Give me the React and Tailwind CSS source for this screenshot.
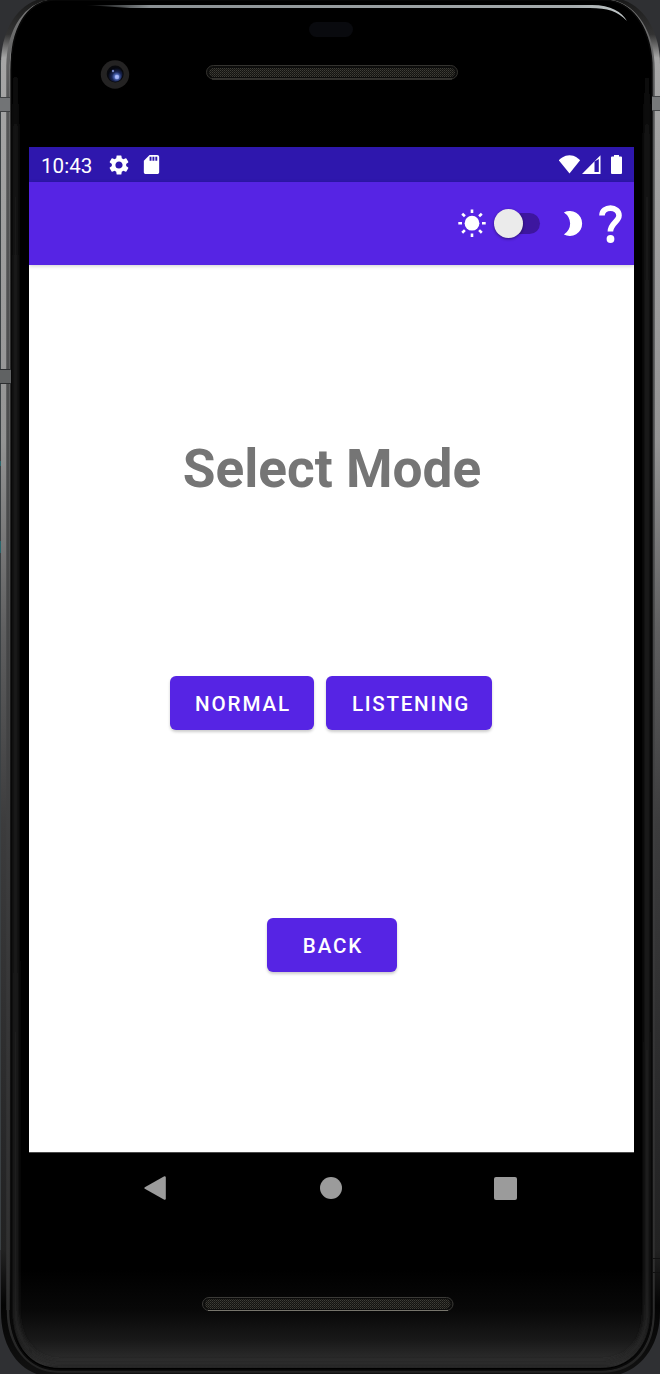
import React from "react";

function Casing() {
  const body = "M54 -3H606C640 -3 660 28 660 64V1312C660 1350 636 1377 602 1377H54C22 1377 1 1350 1 1312V64C1 28 20 -3 54 -3Z";
  const glass = "M56 0H602C636 0 652 34 652 70V1312C652 1346 632 1370 600 1370H60C28 1370 11 1346 11 1312V70C11 30 26 0 56 0Z";
  return (
    <svg className="absolute inset-0 h-full w-full" viewBox="0 0 660 1374" aria-hidden="true">
      <defs>
        <linearGradient id="metal" x1="0" y1="0" x2="0" y2="1374" gradientUnits="userSpaceOnUse">
          <stop offset="0" stopColor="#1a1a1a" />
          <stop offset=".025" stopColor="#333" />
          <stop offset=".042" stopColor="#a6a6a6" />
          <stop offset=".32" stopColor="#949494" />
          <stop offset=".46" stopColor="#5f5f60" />
          <stop offset=".6" stopColor="#3c3c3d" />
          <stop offset=".85" stopColor="#262627" />
          <stop offset=".91" stopColor="#222" />
          <stop offset=".95" stopColor="#040404" />
          <stop offset="1" stopColor="#111" />
        </linearGradient>
        <linearGradient id="rim" x1="0" y1="0" x2="0" y2="1374" gradientUnits="userSpaceOnUse">
          <stop offset="0" stopColor="#777" />
          <stop offset=".07" stopColor="#555657" />
          <stop offset=".35" stopColor="#4b4c4d" />
          <stop offset=".75" stopColor="#363637" />
          <stop offset=".93" stopColor="#303030" />
          <stop offset="1" stopColor="#222" />
        </linearGradient>
        <linearGradient id="chin" x1="0" y1="1270" x2="0" y2="1371" gradientUnits="userSpaceOnUse">
          <stop offset="0" stopColor="#000" />
          <stop offset=".4" stopColor="#080808" />
          <stop offset=".7" stopColor="#191919" />
          <stop offset=".93" stopColor="#303030" />
          <stop offset="1" stopColor="#171717" />
        </linearGradient>
        <linearGradient id="glow" x1="0" y1="60" x2="0" y2="1374" gradientUnits="userSpaceOnUse">
          <stop offset="0" stopColor="#000" />
          <stop offset=".06" stopColor="#1f1f1f" />
          <stop offset="1" stopColor="#272727" />
        </linearGradient>
        <linearGradient id="shine" x1="85" y1="0" x2="628" y2="0" gradientUnits="userSpaceOnUse">
          <stop offset="0" stopColor="#8b9194" stopOpacity="0" />
          <stop offset=".12" stopColor="#8b9194" />
          <stop offset=".9" stopColor="#a5abad" />
          <stop offset="1" stopColor="#c3c9ca" />
        </linearGradient>
        <radialGradient id="lens" cx=".6" cy=".65" r=".6">
          <stop offset="0" stopColor="#b4c4ff" />
          <stop offset=".25" stopColor="#526dbb" />
          <stop offset=".55" stopColor="#182452" />
          <stop offset="1" stopColor="#05070f" />
        </radialGradient>
        <pattern id="mesh" width="2" height="2" patternUnits="userSpaceOnUse">
          <rect width="2" height="2" fill="#141411" />
          <rect width="1" height="1" fill="#3f3e38" />
          <rect x="1" y="1" width="1" height="1" fill="#2f2e29" />
        </pattern>
        <filter id="soft" x="-20%" y="-5%" width="140%" height="110%">
          <feGaussianBlur stdDeviation="2" />
        </filter>
        <clipPath id="glassClip"><path d={glass} /></clipPath>
      </defs>

      <rect width="660" height="1374" fill="#2f3033" />
      <rect y="60" width="2" height="1190" fill="#3b4144" />
      <path d={body} fill="url(#metal)" />
      <rect y="461" width="1" height="5" fill="#28666c" />
      <rect y="541" width="1" height="12" fill="#28666c" />
      <path d="M8 1310V66C8.500 30 26 1 56 1" fill="none" stroke="url(#rim)" strokeWidth="3.500" />
      <path d="M8 1310C8 1346 28 1371 58 1371.500H602C636 1371.500 653.500 1346 653.500 1312V70C653.500 36 638 2 604 0" fill="none" stroke="url(#rim)" strokeWidth="2.500" />
      <path d={glass} fill="#000" />
      <g clipPath="url(#glassClip)">
        <path d="M11 1260H652V1374H11Z" fill="url(#chin)" />
        <path d={glass} fill="none" stroke="#000" strokeWidth="4" />
        <path d="M15.500 60V1308C15.500 1345 36 1363 62 1363H600C630 1363 647 1342 647 1310V60" fill="none" stroke="url(#glow)" strokeWidth="5" filter="url(#soft)" />
      </g>
      <path d={glass} fill="none" stroke="#090909" strokeWidth="1.500" />
      <path d="M85 5H592C611 5 622 12 627 21C617 11 608 8 590 8H130Z" fill="url(#shine)" />

      <rect y="97" width="10" height="15" fill="#727476" />
      <path d="M0 97.500H10M0 111.500H10" stroke="#3f4143" />
      <rect x="652" y="96" width="8" height="15" fill="#77797a" />
      <path d="M652 96.500H660M652 110.500H660" stroke="#444648" />
      <rect y="369" width="11" height="15" fill="#606263" />
      <path d="M0 369.500H11M0 383.500H11" stroke="#2c2e30" />
      <path d="M652 1258.500H660M652 1272.500H660" stroke="#111" />

      <rect x="309" y="22" width="44" height="15" rx="7.500" fill="#090a0e" />
      <circle cx="115" cy="74.500" r="14.200" fill="#242323" />
      <circle cx="115.200" cy="74" r="8.500" fill="#08090d" />
      <circle cx="115.200" cy="74.500" r="7.300" fill="url(#lens)" />
      <circle cx="113" cy="71" r="1.200" fill="#7282bd" />
      <circle cx="117" cy="77" r="2.200" fill="#b1bfff" opacity=".75" />

      <rect x="206.500" y="65.500" width="251" height="13.500" rx="6.750" fill="#0d0d0c" stroke="#34332f" />
      <rect x="209" y="68" width="246" height="9" rx="4.500" fill="url(#mesh)" />
      <path d="M212 79H452" stroke="#4b4a44" />
      <rect x="202.500" y="1297.500" width="250.500" height="13" rx="6.500" fill="#0d0d0c" stroke="#3b3a37" />
      <rect x="205" y="1299" width="245.500" height="10" rx="5" fill="url(#mesh)" />
      <path d="M208 1310.500H448" stroke="#77756c" />
    </svg>
  );
}

function StatusBar() {
  return (
    <div className="flex h-[35px] items-center justify-between bg-[#2e17ad] pr-[11px] pl-3">
      <div className="flex items-center">
        <span className="w-[66px] pt-[3px] text-[20.6px] leading-6">10:43</span>
        <svg className="h-[24px] w-[24px]" viewBox="0 0 24 24" fill="currentColor">
          <path d="M19.140 12.940c.040-.300.060-.610.060-.940 0-.320-.020-.640-.070-.940l2.030-1.580a.49.49 0 0 0 .120-.610l-1.920-3.320a.488.488 0 0 0-.590-.220l-2.390.960c-.500-.380-1.030-.700-1.620-.940l-.360-2.540a.484.484 0 0 0-.480-.410h-3.840c-.240 0-.430.170-.470.410l-.360 2.540c-.590.240-1.130.570-1.620.940l-2.390-.960c-.220-.080-.470 0-.590.220L2.740 8.870c-.120.210-.080.470.120.610l2.030 1.580c-.050.300-.090.630-.090.940s.020.640.070.940l-2.030 1.580a.49.49 0 0 0-.120.610l1.920 3.320c.120.220.370.290.590.220l2.390-.960c.500.380 1.030.700 1.620.940l.360 2.540c.050.240.240.410.480.410h3.840c.240 0 .440-.170.470-.410l.360-2.540c.590-.240 1.130-.560 1.620-.940l2.390.960c.220.080.470 0 .590-.220l1.920-3.320c.120-.220.070-.470-.120-.610l-2.010-1.580zM12 15.600A3.610 3.610 0 0 1 8.400 12c0-1.980 1.620-3.600 3.600-3.600s3.600 1.620 3.600 3.600-1.620 3.600-3.600 3.600z" />
        </svg>
        <svg className="ml-[9px] h-[23px] w-[23px]" viewBox="0 0 24 24" fill="currentColor">
          <path d="M18 2h-8L4.020 8 4 20c0 1.100.900 2 2 2h12c1.100 0 2-.900 2-2V4c0-1.100-.900-2-2-2zm-6 6h-2V4h2v4zm3 0h-2V4h2v4zm3 0h-2V4h2v4z" />
        </svg>
      </div>
      <div className="flex items-center pb-px">
        <svg className="h-[20px] w-[22px]" viewBox="0 0 22 20" fill="currentColor">
          <path d="M10.500 19.500L-.1 6.300C1 5 5 1.200 10.500 1.200S20 5 21.100 6.300Z" />
        </svg>
        <svg className="ml-px h-[20px] w-[19px]" viewBox="0 0 19 20" fill="currentColor">
          <path fillRule="evenodd" d="M0 20L18.500 1.300V20ZM12.500 7.500V18H16.800V5Z" />
        </svg>
        <svg className="ml-[10px] h-[20px] w-[12px]" viewBox="0 0 12 20" fill="currentColor">
          <path d="M3 1H8V2.500H10Q11 2.500 11 3.500V19Q11 20 10 20H1Q0 20 0 19V3.500Q0 2.500 1 2.500H3Z" />
        </svg>
      </div>
    </div>
  );
}

function AppBar() {
  return (
    <header className="z-10 flex h-[83px] items-center justify-end bg-[#5624e4] pr-[11px] shadow-[0_1px_4px_rgba(0,0,0,0.2)]">
      <svg className="h-[30px] w-[30px]" viewBox="0 0 30 30" fill="currentColor">
        <circle cx="15" cy="14.200" r="7.400" />
        <path d="M15 .5V4M15 24.400V27.900M1.300 14.200H5M25 14.200H28.700M5.200 4.700L7.900 7.300M22.100 21.100L24.800 23.700M5.200 23.700L7.900 21.100M22.100 7.300L24.800 4.700" stroke="currentColor" strokeWidth="2.600" />
      </svg>
      <button role="switch" aria-checked="false" aria-label="Dark mode" className="ml-[7px] flex h-[21px] w-[46px] items-center rounded-full bg-[#3d169f]">
        <span className="h-[29px] w-[29px] shrink-0 rounded-full bg-[#ebebeb] shadow-[0_1px_3px_rgba(0,0,0,0.45)]" />
      </button>
      <svg className="ml-[23px] h-[26px] w-[20px]" viewBox="0 0 20 26" fill="currentColor">
        <path d="M.9 1.400A12.500 12.500 0 1 1 .9 23.600A13 13 0 0 0 .9 1.400Z" />
      </svg>
      <svg className="ml-4 h-[38px] w-[24px]" viewBox="0 0 24 38" fill="none">
        <path d="M3 10.500C3 5.800 7 3.100 11.500 3.100S20 6.200 20 10.500C20 16.500 11.400 18.500 11.400 26.500" stroke="currentColor" strokeWidth="5.600" />
        <circle cx="11.500" cy="34" r="3.900" fill="currentColor" />
      </svg>
    </header>
  );
}

function ModeButton({ children, className }) {
  return (
    <button className={`h-[54px] rounded-[6px] bg-[#5624e4] pt-[2px] text-[20.6px] font-medium text-white shadow-[0_2px_3px_rgba(0,0,0,0.2)] ${className}`}>
      {children}
    </button>
  );
}

function NavBar() {
  return (
    <nav className="flex h-[71px] items-center justify-between border-t border-[#4a4a4a] pr-[117px] pl-[115px] text-[#9b9b9b]">
      <svg className="h-[24px] w-[22px]" viewBox="0 0 22 24" fill="currentColor">
        <path d="M.8 11.200L20.300.3Q21.800 .2 21.800 1.500V22.500Q21.800 24 20.300 23.700L.8 12.800Q-.2 12 .8 11.200Z" />
      </svg>
      <span className="ml-[2px] h-[22px] w-[22px] rounded-full bg-[#9b9b9b]" />
      <span className="h-[23px] w-[23px] rounded-[2px] bg-[#9b9b9b]" />
    </nav>
  );
}

export default function App() {
  return (
    <div className="relative h-[1374px] w-[660px] overflow-hidden font-[Roboto,sans-serif]">
      <Casing />
      <div className="relative flex flex-col pt-[147px] pr-[26px] pl-[29px] text-white">
        <StatusBar />
        <AppBar />
        <main className="flex h-[887px] flex-col items-center bg-white pt-[172px]">
          <h1 className="pl-px text-[53.200px] leading-[64px] font-bold text-[#757575]">Select Mode</h1>
          <div className="mt-[175px] mr-px flex gap-3">
            <ModeButton className="w-[144px] pl-[2px] tracking-[1.840px]">NORMAL</ModeButton>
            <ModeButton className="w-[166px] pl-[4px] tracking-[1.700px]">LISTENING</ModeButton>
          </div>
          <ModeButton className="mt-[188px] w-[130px] pl-[3px] tracking-[1.840px]">BACK</ModeButton>
        </main>
        <NavBar />
      </div>
    </div>
  );
}
